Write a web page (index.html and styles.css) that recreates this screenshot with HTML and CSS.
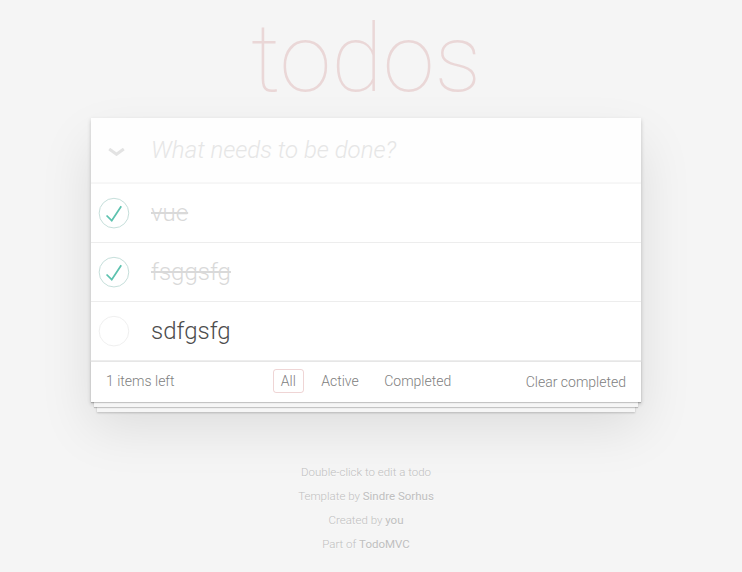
FILE: index.html
```html
<!DOCTYPE html>
<html lang="en">
<head>
<meta charset="utf-8">
<title>todos</title>
<link rel="stylesheet" href="styles.css">
</head>
<body>
<div class="page">
  <h1 class="title">todos</h1>
  <section class="todoapp">
    <header class="new-row">
      <span class="toggle-all"><svg width="17" height="8" viewBox="0 0 17 8"><polyline points="1.2,1 8.5,6.3 15.8,1" fill="none" stroke="#e3e3e3" stroke-width="3"/></svg></span>
      <input class="new-todo" placeholder="What needs to be done?">
    </header>
    <ul class="todo-list">
      <li class="completed">
        <svg class="toggle" width="40" height="40" viewBox="-10 -18 100 135"><circle cx="50" cy="50" r="50" fill="none" stroke="#bddad5" stroke-width="3"/><path fill="#5dc2af" d="M72 25L42 71 27 56l-4 4 20 20 34-52z"/></svg>
        <label>vue</label>
      </li>
      <li class="completed">
        <svg class="toggle" width="40" height="40" viewBox="-10 -18 100 135"><circle cx="50" cy="50" r="50" fill="none" stroke="#bddad5" stroke-width="3"/><path fill="#5dc2af" d="M72 25L42 71 27 56l-4 4 20 20 34-52z"/></svg>
        <label>fsggsfg</label>
      </li>
      <li>
        <svg class="toggle" width="40" height="40" viewBox="-10 -18 100 135"><circle cx="50" cy="50" r="50" fill="none" stroke="#ededed" stroke-width="3"/></svg>
        <label>sdfgsfg</label>
      </li>
    </ul>
    <footer class="footer">
      <span class="todo-count">1 items left</span>
      <ul class="filters">
        <li><a class="selected">All</a></li>
        <li><a>Active</a></li>
        <li><a>Completed</a></li>
      </ul>
      <span class="clear-completed">Clear completed</span>
    </footer>
  </section>
  <footer class="info">
    <p>Double-click to edit a todo</p>
    <p>Template by <a>Sindre Sorhus</a></p>
    <p>Created by <a>you</a></p>
    <p>Part of <a>TodoMVC</a></p>
  </footer>
</div>
</body>
</html>
```

FILE: styles.css
```css
html, body {
  margin: 0;
  padding: 0;
}
body {
  background: #f5f5f5;
  color: #4d4d4d;
  font: 300 14px Roboto, "Liberation Sans", sans-serif;
  line-height: 1.4em;
}
.page {
  width: 550px;
  margin-left: 91px;
}
.title {
  margin: 0;
  height: 118px;
  line-height: 118px;
  font-size: 94px;
  font-weight: 100;
  text-align: center;
  color: rgba(175, 47, 47, 0.15);
}
.todoapp {
  background: #fff;
  box-shadow: 0 2px 4px 0 rgba(0,0,0,0.2), 0 25px 50px 0 rgba(0,0,0,0.1);
}
.new-row {
  display: flex;
  align-items: center;
  background: rgba(0,0,0,0.003);
  box-shadow: inset 0 -2px 1px rgba(0,0,0,0.03);
}
.toggle-all {
  width: 60px;
  flex: none;
  display: flex;
  align-items: center;
  padding-left: 17px;
  box-sizing: border-box;
}
.toggle-all svg {
  display: block;
  margin-top: 3px;
}
.new-todo {
  flex: 1;
  min-width: 0;
  margin: 0;
  padding: 16px 16px 16px 0;
  border: none;
  outline: none;
  background: transparent;
  font: 300 24px Roboto, "Liberation Sans", sans-serif;
  line-height: 1.4em;
  color: #4d4d4d;
}
.new-todo::placeholder {
  font-style: italic;
  font-weight: 300;
  color: #e6e6e6;
}
.todo-list {
  margin: 0;
  padding: 0;
  list-style: none;
}
.todo-list li {
  display: flex;
  align-items: center;
  font-size: 24px;
  border-bottom: 1px solid #ededed;
}
.toggle {
  flex: none;
  display: block;
}
.todo-list label {
  display: block;
  padding: 15px 15px 15px 20px;
  line-height: 28px;
}
.todo-list li.completed label {
  color: #d9d9d9;
  text-decoration: line-through;
}
.footer {
  display: grid;
  grid-template-columns: 1fr auto 1fr;
  align-items: center;
  color: #808080;
  padding: 10px 15px;
  height: 20px;
  border-top: 1px solid #e6e6e6;
  box-shadow: 0 1px 1px rgba(0,0,0,0.2), 0 8px 0 -3px #f6f6f6, 0 9px 1px -3px rgba(0,0,0,0.2), 0 16px 0 -6px #f6f6f6, 0 17px 2px -6px rgba(0,0,0,0.2);
}
.todo-count {
  justify-self: start;
}
.filters {
  margin: 0;
  padding: 0;
  list-style: none;
}
.filters li {
  display: inline;
}
.filters a {
  margin: 3px;
  padding: 3px 7px;
  border: 1px solid transparent;
  border-radius: 3px;
}
.filters a.selected {
  border-color: rgba(175, 47, 47, 0.2);
}
.clear-completed {
  justify-self: end;
  line-height: 20px;
}
.info {
  margin-top: 58px;
  color: #bfbfbf;
  font-size: 11.5px;
  text-align: center;
  text-shadow: 0 1px 0 rgba(255,255,255,0.5);
}
.info p {
  margin: 0;
  line-height: 24px;
}
.info a {
  font-weight: 400;
}
```
